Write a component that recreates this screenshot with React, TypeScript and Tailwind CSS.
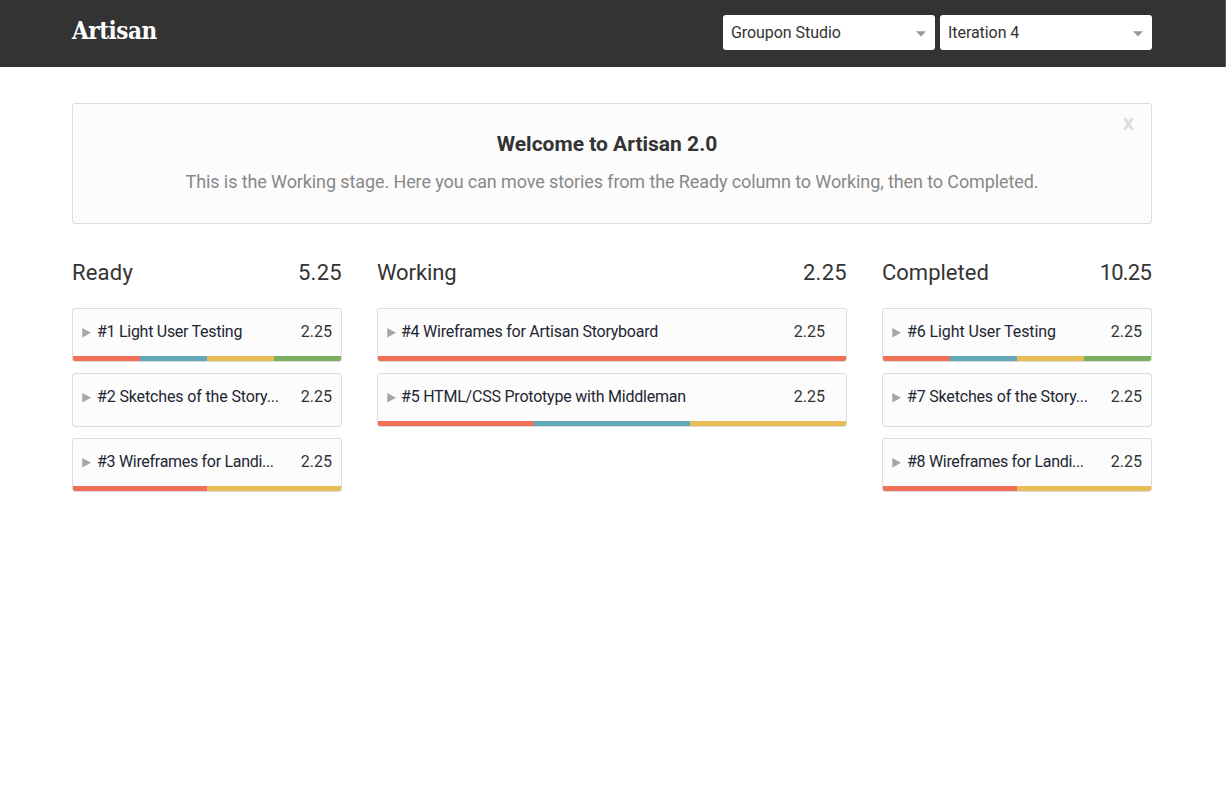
import React from "react";

type Tone = "red" | "blue" | "yellow" | "green";

interface Story {
  title: string;
  spacing: string;
  tones: Tone[];
}

interface ColumnData {
  name: string;
  total: string;
  width: string;
  headSpacing: string;
  totalSpacing: string;
  pad: string;
  stories: Story[];
}

const toneClass: Record<Tone, string> = {
  red: "bg-[#f17057]",
  blue: "bg-[#62a8bb]",
  yellow: "bg-[#e8bd55]",
  green: "bg-[#79af61]",
};

const columns: ColumnData[] = [
  {
    name: "Ready",
    total: "5.25",
    width: "w-[270px]",
    headSpacing: "tracking-[0.2px]",
    totalSpacing: "tracking-[0.3px]",
    pad: "gap-[6px] pl-[9px] pr-[9px]",
    stories: [
      { title: "#1 Light User Testing", spacing: "tracking-[-0.28px]", tones: ["red", "blue", "yellow", "green"] },
      { title: "#2 Sketches of the Story...", spacing: "tracking-[-0.14px]", tones: [] },
      { title: "#3 Wireframes for Landi...", spacing: "tracking-[-0.3px]", tones: ["red", "yellow"] },
    ],
  },
  {
    name: "Working",
    total: "2.25",
    width: "w-[470px]",
    headSpacing: "tracking-[-0.1px]",
    totalSpacing: "tracking-[0.3px]",
    pad: "gap-[5px] pl-[9px] pr-[21px]",
    stories: [
      { title: "#4 Wireframes for Artisan Storyboard", spacing: "tracking-[-0.25px]", tones: ["red"] },
      { title: "#5 HTML/CSS Prototype with Middleman", spacing: "tracking-[-0.22px]", tones: ["red", "blue", "yellow"] },
    ],
  },
  {
    name: "Completed",
    total: "10.25",
    width: "w-[270px]",
    headSpacing: "tracking-[0px]",
    totalSpacing: "tracking-[-0.8px] mr-[1px]",
    pad: "gap-[6px] pl-[9px] pr-[9px]",
    stories: [
      { title: "#6 Light User Testing", spacing: "tracking-[-0.1px]", tones: ["red", "blue", "yellow", "green"] },
      { title: "#7 Sketches of the Story...", spacing: "tracking-[-0.18px]", tones: [] },
      { title: "#8 Wireframes for Landi...", spacing: "tracking-[-0.3px]", tones: ["red", "yellow"] },
    ],
  },
];

function Select({ label }: { label: string }) {
  return (
    <button className="flex h-[35px] w-[212px] items-center justify-between rounded-[3px] bg-white pr-[9px] pl-2 text-[16px] leading-[35px] tracking-[-0.06px] text-[#333]">
      <span>{label}</span>
      <svg className="mt-[2px]" width="10" height="6" viewBox="0 0 10 6">
        <path d="M0 0.3H10L5 5.6Z" fill="#999" />
      </svg>
    </button>
  );
}

function StoryCard({ story, pad }: { story: Story; pad: string }) {
  return (
    <article className="flex h-[54px] flex-col justify-between overflow-hidden rounded-[3px] border border-[#dcdcdc] bg-[#fcfcfc]">
      <div className={`flex h-[46px] items-center text-[16px] ${pad}`}>
        <svg className="mt-[2px] shrink-0" width="9" height="10" viewBox="0 0 9 10">
          <path d="M0.3 0L9 4.7L0.3 9.4Z" fill="#a6a6a6" />
        </svg>
        <span className={`grow whitespace-nowrap text-[#222633] ${story.spacing}`}>{story.title}</span>
        <span className="text-[#333]">2.25</span>
      </div>
      <div className="flex h-[5px]">
        {story.tones.map((tone) => (
          <span key={tone} className={`grow basis-0 ${toneClass[tone]}`} />
        ))}
      </div>
    </article>
  );
}

function Column({ data }: { data: ColumnData }) {
  return (
    <section className={data.width}>
      <h2 className="flex h-[30px] items-center justify-between text-[22px] text-[#333]">
        <span className={data.headSpacing}>{data.name}</span>
        <span className={data.totalSpacing}>{data.total}</span>
      </h2>
      <div className="mt-[21px] flex flex-col gap-[11px]">
        {data.stories.map((story) => (
          <StoryCard key={story.title} story={story} pad={data.pad} />
        ))}
      </div>
    </section>
  );
}

export default function App() {
  return (
    <div className="min-h-screen bg-white font-['Roboto',sans-serif] text-[#333]">
      <header className="h-[67px] border-r border-[#5c5c5c] bg-[#333]">
        <div className="ml-[72px] flex w-[1080px] items-start justify-between">
          <h1 className="mt-[15px] font-['DejaVu_Serif_Condensed','DejaVu_Serif',serif] text-[24px] leading-8 font-bold tracking-[-0.5px] text-white">
            Artisan
          </h1>
          <div className="mt-[15px] flex gap-[5px]">
            <Select label="Groupon Studio" />
            <Select label="Iteration 4" />
          </div>
        </div>
      </header>
      <main className="ml-[72px] w-[1080px] pt-9">
        <section className="relative h-[121px] rounded-[3px] border border-[#dcdcdc] bg-[#fcfcfc] text-center">
          <h2 className="mt-[26px] pr-[10px] text-[21px] leading-[28px] font-bold">Welcome to Artisan 2.0</h2>
          <p className="mt-[11px] text-[18px] leading-[26px] tracking-[-0.105px] text-[#888]">
            This is the Working stage. Here you can move stories from the Ready column to Working, then to Completed.
          </p>
          <button className="absolute top-[7px] right-[17px] text-[22px] leading-[24px] font-bold text-[#ddd]">x</button>
        </section>
        <div className="mt-[33px] flex gap-[35px]">
          {columns.map((column) => (
            <Column key={column.name} data={column} />
          ))}
        </div>
      </main>
    </div>
  );
}
